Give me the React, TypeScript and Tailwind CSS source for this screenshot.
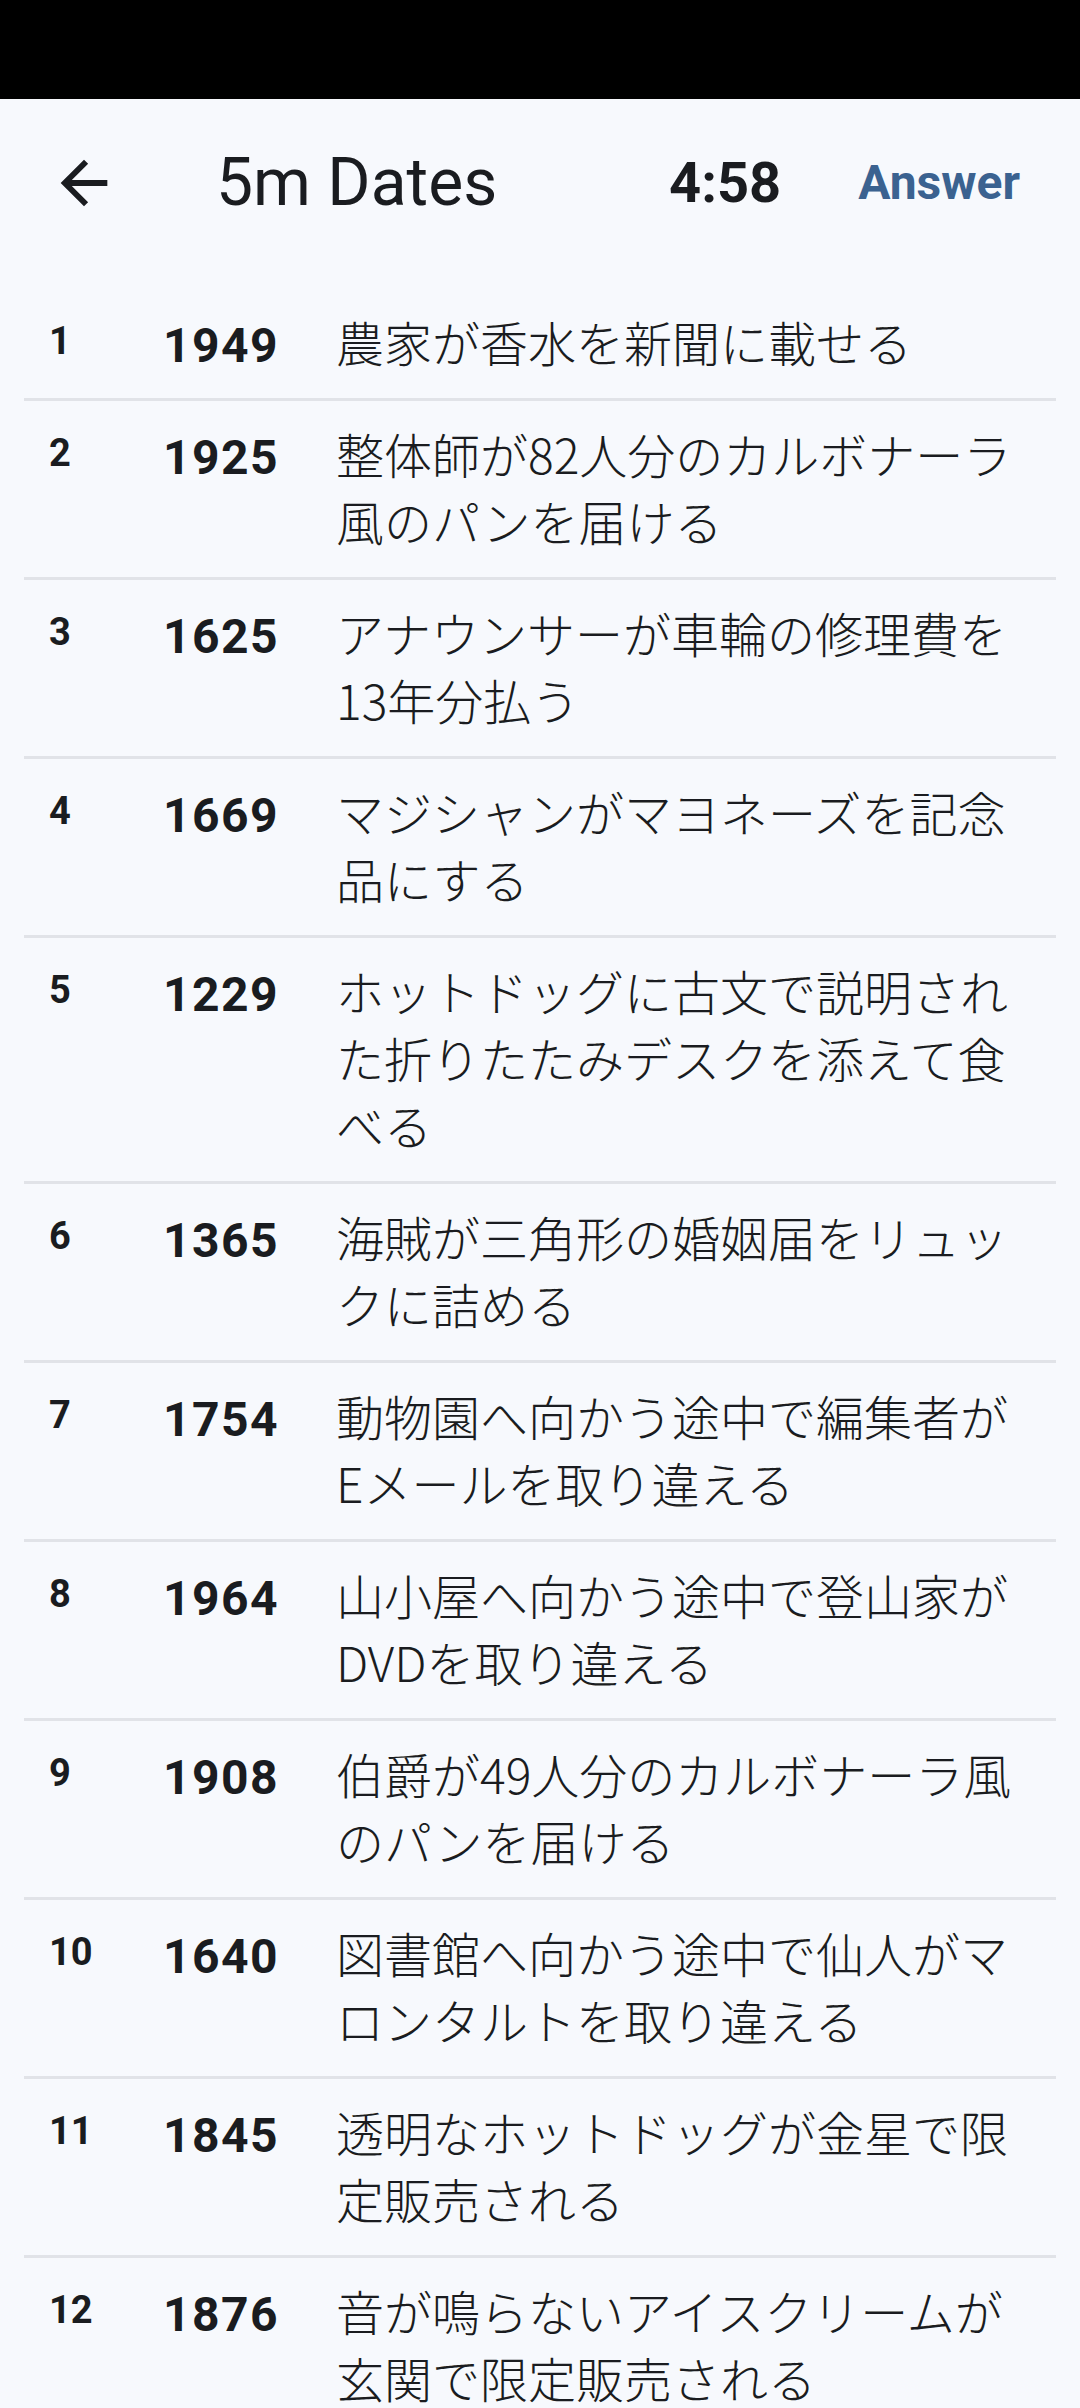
import React from "react";

const rows: [string, string, string][] = [
  ["1", "1949", "農家が香水を新聞に載せる"],
  ["2", "1925", "整体師が82人分のカルボナーラ風のパンを届ける"],
  ["3", "1625", "アナウンサーが車輪の修理費を13年分払う"],
  ["4", "1669", "マジシャンがマヨネーズを記念品にする"],
  ["5", "1229", "ホットドッグに古文で説明された折りたたみデスクを添えて食べる"],
  ["6", "1365", "海賊が三角形の婚姻届をリュックに詰める"],
  ["7", "1754", "動物園へ向かう途中で編集者がEメールを取り違える"],
  ["8", "1964", "山小屋へ向かう途中で登山家がDVDを取り違える"],
  ["9", "1908", "伯爵が49人分のカルボナーラ風のパンを届ける"],
  ["10", "1640", "図書館へ向かう途中で仙人がマロンタルトを取り違える"],
  ["11", "1845", "透明なホットドッグが金星で限定販売される"],
  ["12", "1876", "音が鳴らないアイスクリームが玄関で限定販売される"],
];

export default function App() {
  return (
    <div className="w-[1080px] h-[2408px] overflow-hidden bg-[#f7f9fd] text-[#1a1c20]">
      <div className="h-[99px] bg-black" />
      <div className="h-[168px] flex items-center font-['Roboto',sans-serif]">
        <div className="ml-[49px] w-[70px] h-[70px] flex items-center justify-center">
          <svg viewBox="0 0 24 24" width="70" height="70" fill="#1a1c20">
            <path d="M20 11H7.83l5.59-5.59L12 4l-8 8 8 8 1.41-1.41L7.83 13H20v-2z" />
          </svg>
        </div>
        <div className="ml-[97px] text-[66px] leading-none">5m Dates</div>
        <div className="flex-1" />
        <div className="text-[56px] font-bold leading-none">4:58</div>
        <div className="ml-[77px] mr-[60px] text-[48px] font-bold leading-none text-[#3b6290]">
          Answer
        </div>
      </div>
      <div className="px-[24px] pt-[22px]">
        {rows.map(([n, y, t]) => (
          <div
            key={n}
            className="flex items-start pl-[25px] pr-[25px] pt-[19px] pb-[23px] border-b-[3px] border-[#e1e3e8]"
          >
            <div className="w-[114px] shrink-0 font-['Roboto',sans-serif] font-bold text-[38px] leading-[67px]">
              {n}
            </div>
            <div className="w-[173px] shrink-0 pt-[8px] font-['Roboto',sans-serif] font-bold text-[48px] leading-[59px] tracking-[1.5px]">
              {y}
            </div>
            <div className="flex-1 min-w-0 font-['Noto_Sans_CJK_JP',sans-serif] font-light text-[48px] leading-[67px]">
              {t}
            </div>
          </div>
        ))}
      </div>
    </div>
  );
}
